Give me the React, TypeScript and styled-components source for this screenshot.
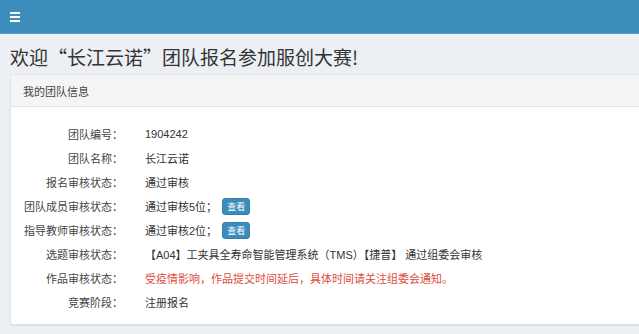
import React from "react";
import styled, { createGlobalStyle } from "styled-components";

const GlobalStyle = createGlobalStyle`
  html, body {
    margin: 0;
    padding: 0;
    background: #ecf0f5;
    overflow: hidden;
  }
  body {
    font-family: "Liberation Sans", "Noto Sans CJK SC", sans-serif;
    color: #333;
  }
`;

const Page = styled.div`
  width: 100%;
  min-height: 334px;
  background: #ecf0f5;
`;

const TopBar = styled.header`
  height: 33px;
  background: #3c8dbc;
  border-bottom: 1px solid #5aa0c8;
  display: flex;
  align-items: center;
  padding-left: 10px;
`;

const MenuButton = styled.button`
  display: flex;
  flex-direction: column;
  gap: 2px;
  padding: 0;
  margin: 0;
  border: 0;
  background: transparent;
  cursor: pointer;
`;

const MenuBar = styled.span`
  display: block;
  width: 10px;
  height: 2px;
  background: #ffffff;
`;

const Content = styled.main`
  padding: 8px 0 0 10px;
`;

const Title = styled.h1`
  margin: 0 0 2px;
  font-family: "Noto Sans CJK SC", sans-serif;
  font-size: 19px;
  font-weight: 400;
  line-height: 30px;
  color: #333;
`;

const Panel = styled.section`
  margin-right: -20px;
  background: #ffffff;
  border: 1px solid #e1e4e8;
  border-radius: 3px;
  box-shadow: 0 1px 1px rgba(0, 0, 0, 0.08);
`;

const PanelHeading = styled.div`
  height: 31px;
  display: flex;
  align-items: center;
  padding-left: 12px;
  background: #f5f5f5;
  border-bottom: 1px solid #e4e4e4;
  font-family: "Noto Sans CJK SC", sans-serif;
  font-size: 11px;
  color: #444;
`;

const PanelBody = styled.div`
  padding: 15px 0 10px;
`;

const Row = styled.div`
  display: grid;
  grid-template-columns: 112px 1fr;
  column-gap: 22px;
  align-items: center;
  height: 24px;
  font-size: 11px;
`;

const Label = styled.div`
  text-align: right;
  color: #444;
`;

const Value = styled.div<{ $danger?: boolean }>`
  display: flex;
  align-items: center;
  gap: 5px;
  color: ${(p) => (p.$danger ? "#dd4b39" : "#333")};
  white-space: nowrap;
`;

const SmallButton = styled.button`
  height: 17px;
  padding: 0 4px;
  border: 1px solid #367fa9;
  border-radius: 3px;
  background: #3c8dbc;
  color: #ffffff;
  font-family: "Noto Sans CJK SC", sans-serif;
  font-size: 9px;
  line-height: 15px;
  cursor: pointer;
`;

const rows: { label: string; value: string; button?: boolean; danger?: boolean }[] = [
  { label: "团队编号：", value: "1904242" },
  { label: "团队名称：", value: "长江云诺" },
  { label: "报名审核状态：", value: "通过审核" },
  { label: "团队成员审核状态：", value: "通过审核5位；", button: true },
  { label: "指导教师审核状态：", value: "通过审核2位；", button: true },
  {
    label: "选题审核状态：",
    value: "【A04】工夹具全寿命智能管理系统（TMS）【捷普】 通过组委会审核",
  },
  {
    label: "作品审核状态：",
    value: "受疫情影响，作品提交时间延后，具体时间请关注组委会通知。",
    danger: true,
  },
  { label: "竞赛阶段：", value: "注册报名" },
];

export default function App() {
  return (
    <Page>
      <GlobalStyle />
      <TopBar>
        <MenuButton aria-label="menu">
          <MenuBar />
          <MenuBar />
          <MenuBar />
        </MenuButton>
      </TopBar>
      <Content>
        <Title>欢迎“长江云诺”团队报名参加服创大赛!</Title>
        <Panel>
          <PanelHeading>我的团队信息</PanelHeading>
          <PanelBody>
            {rows.map((r) => (
              <Row key={r.label}>
                <Label>{r.label}</Label>
                <Value $danger={r.danger}>
                  {r.value}
                  {r.button && <SmallButton>查看</SmallButton>}
                </Value>
              </Row>
            ))}
          </PanelBody>
        </Panel>
      </Content>
    </Page>
  );
}
